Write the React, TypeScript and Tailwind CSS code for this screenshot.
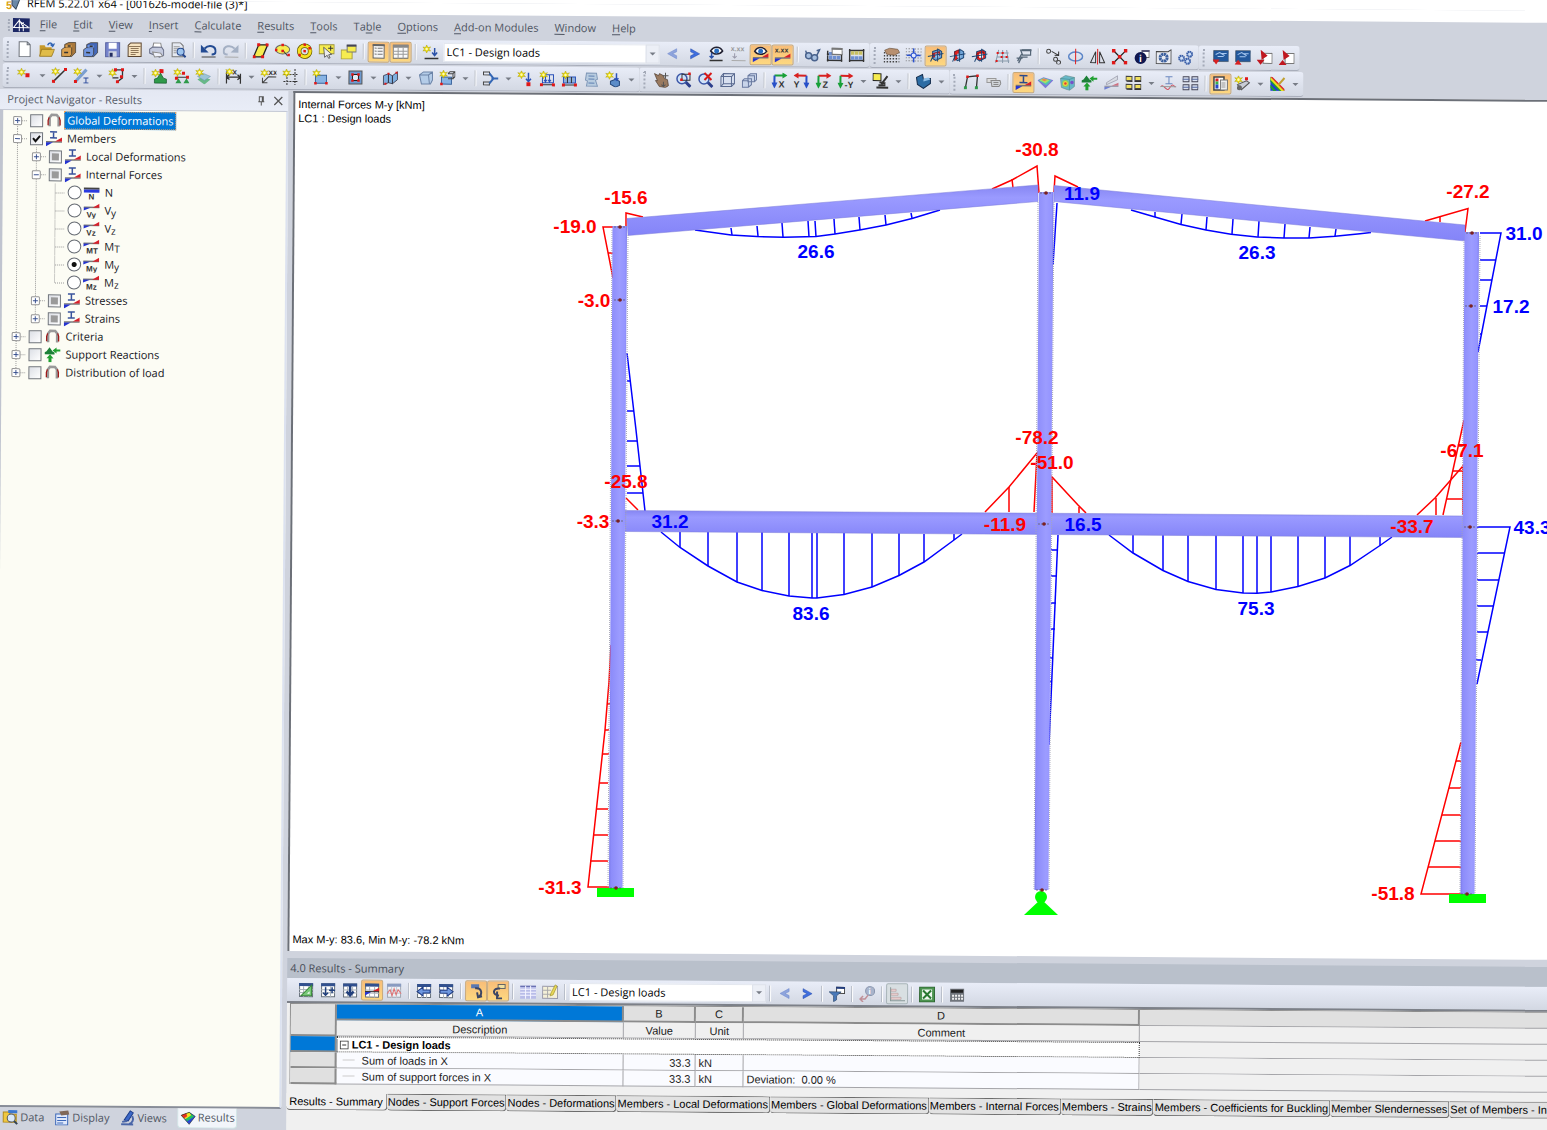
import type { ReactNode } from "react"
import clsx from "clsx"

// ---------- small drawing helpers for the 16x16 icons ----------

const Spark = ({ x = 4, y = 4 }: { x?: number; y?: number }) => (
  <g transform={`translate(${x} ${y})`}>
    <path d="M0-4 1.2-1.4 4-2 2 0 4 2 1.2 1.6 0 4-1.2 1.6-4 2-2 0-4-2-1.2-1.4Z" fill="#f0e000" stroke="#a89a10" strokeWidth=".5" />
    <circle r="1.3" fill="#fffbb0" />
  </g>
)

const Dots = ({ at, c = "#e01818", s = 3 }: { at: number[][]; c?: string; s?: number }) => (
  <>
    {at.map(([x, y]) => (
      <rect key={`${x}-${y}`} x={x - s / 2} y={y - s / 2} width={s} height={s} fill={c} />
    ))}
  </>
)

const L = ({ d, c = "#333", w = 1, f = "none" }: { d: string; c?: string; w?: number; f?: string }) => (
  <path d={d} stroke={c} strokeWidth={w} fill={f} />
)

const T = ({ x, y, s = 8, c = "#333", children }: { x: number; y: number; s?: number; c?: string; children: string }) => (
  <text x={x} y={y} fontSize={s} fontWeight="bold" fill={c} fontFamily="Liberation Sans, sans-serif">
    {children}
  </text>
)

const Diagram = () => (
  <>
    <L d="M0 11.500H16" c="#777" w={1.5} />
    <path d="M0 12h7l-7 4Z" fill="#2433d0" />
    <path d="M16 11H9l7-4Z" fill="#d8202a" />
  </>
)

const Sheet = ({ c = "#fff" }: { c?: string }) => (
  <>
    <path d="M1.500 1.500h13v13h-13Z" fill={c} stroke="#66707a" />
    <path d="M1 1h14v3H1Z" fill="#31508f" />
    <L d="M1 7.500H15M1 10.500H15M5.500 4V15M10.500 4V15" c="#a8b0b8" />
  </>
)

const Frame3d = ({ hot }: { hot: number }) => (
  <>
    <path d="M5 4 11 2l3 2v6l-6 3-3-2Z" fill={hot === 2 ? "#e02020" : "#6fa4d8"} stroke="#1d4674" />
    <path d={hot === 1 ? "M5 4l4-2v8l-4 3Z" : "M5 6l7-2v4L5 10Z"} fill="#e02020" stroke="#701010" strokeWidth=".6" />
    <path d="M7.500 6h4v4h-4Z" fill={hot === 2 ? "#fff" : "#9cc7ee"} />
    <L d="M0 9 16 6M3 14 6 7M10 14V1" c="#1d4674" />
  </>
)

const Cabinet = ({ a, b }: { a: string; b: string }) => (
  <>
    <path d="M4 3 8 1h7v10l-4 4H4Z" fill={b} stroke="#39332a" strokeWidth=".7" />
    <path d="M1 8l3-2h7v7l-2 2H1Z" fill={a} stroke="#39332a" strokeWidth=".7" />
    <path d="M5 3.500h6V6H5Z" fill={a} />
    <L d="M3.500 11h4M7 4.500h3" w={1.5} />
  </>
)

const Axis = ({ a, b, t, m }: { a: string; b: string; t: string; m?: boolean }) => (
  <g>
    <g transform={m ? "matrix(-1 0 0 1 16 0)" : undefined}>
      <L d="M3 3h9" c={a} w={2} />
      <path d="M11 0l5 3-5 3Z" fill={a} />
      <L d="M3 3v9" c={b} w={2} />
      <path d="M0 10l3 6 3-6Z" fill={b} />
    </g>
    <T x={m ? 0 : 7} y={15} s={9}>{t}</T>
  </g>
)

const Magnifier = () => (
  <>
    <L d="M10 10l5 5" c="#2d3f8c" w={3} />
    <circle cx="6.500" cy="7" r="5" fill="#cfe2f8" stroke="#3c57a8" strokeWidth="1.500" />
  </>
)

const icons: Record<string, ReactNode> = {
  new: <path d="M2.500.5h8l3 3v12h-11ZM10.500.5v3h3" fill="#fff" stroke="#6b7078" />,
  open: (
    <>
      <path d="M1 4h5l1 2h6v9H1Z" fill="#c79a2b" />
      <path d="M3 8h13l-3 7H1Z" fill="#e0bc48" stroke="#8a6a14" strokeWidth=".7" />
      <L d="M9 4c1-3 4-3 5 0M12 3l2 2 2-3" c="#3567b5" w={1.5} />
    </>
  ),
  "model-archive": <Cabinet a="#d9a050" b="#a8783c" />,
  "block-archive": <Cabinet a="#6f95e0" b="#4468b8" />,
  save: (
    <>
      <path d="M1 1h14v14H1Z" fill="#7684cc" stroke="#5560a0" />
      <path d="M4 1h8v6H4Z" fill="#fff" />
      <path d="M4 9.500h8V15H4Z" fill="#d4d8e4" />
      <path d="M5 11h3v4H5Z" fill="#222c60" />
    </>
  ),
  report: (
    <>
      <path d="M1.500 3.500 4 1h10.500v13.500h-13Z" fill="#f6e3c0" stroke="#5c4630" />
      <L d="M4 6.500h8M4 8.500h8M4 10.500h8M4 12.500h5M2 4.500h12" c="#8e7658" />
    </>
  ),
  print: (
    <>
      <path d="M4 6 5 1h7l1 5Z" fill="#fff" stroke="#888" />
      <path d="M1 7l3-2h9l2 3v5l-4 2-10-4Z" fill="#c4cade" stroke="#6a7088" />
      <path d="M4 10l8 1 2 3-8 1Z" fill="#eef1fa" stroke="#888" />
    </>
  ),
  preview: (
    <>
      <path d="M1.500.5h8l3 3v11h-11Z" fill="#e6eaf2" stroke="#777" />
      <L d="M3 4.500h6M3 6.500h6M3 8.500h3M3 10.500h3" c="#999" />
      <L d="M12 12l3 3" c="#26478c" w={2} />
      <circle cx="10" cy="9.500" r="3.500" fill="#9cc4ee" stroke="#26478c" />
    </>
  ),
  undo: (
    <>
      <L d="M4 6c4-4 11-3 11 3 0 2-2 3-4 3" c="#234b93" w={2} />
      <path d="M0 2v8h8Z" fill="#234b93" />
      <L d="M1 14.500h14" w={1} c="#444" />
    </>
  ),
  redo: (
    <>
      <L d="M12 6C8 2 1 3 1 9c0 2 2 3 4 3" c="#a4b0c4" w={2} />
      <path d="M16 2v8H8Z" fill="#a4b0c4" />
      <L d="M2 14.500h14" w={1} c="#aaa" />
    </>
  ),
  "select-rhomboid": (
    <>
      <path d="M6 2h9l-5 12H1Z" fill="#f6ec50" stroke="#222" strokeWidth="1.300" />
      <Dots at={[[6, 2], [14.5, 2], [1.5, 14], [10, 14]]} />
    </>
  ),
  "select-ellipse": (
    <>
      <ellipse cx="8" cy="6.500" rx="7" ry="4.500" fill="#f6ec50" stroke="#666" />
      <L d="M8 7l5 6" />
      <Dots at={[[8, 2], [1.5, 7], [14, 12], [8, 8]]} s={2.5} />
    </>
  ),
  "select-ring": (
    <>
      <circle cx="8" cy="8" r="5.500" fill="none" stroke="#665c00" strokeWidth="4.500" />
      <circle cx="8" cy="8" r="5.500" fill="none" stroke="#f6e020" strokeWidth="3" />
      <Dots at={[[8, 1.5], [8, 8], [3, 12], [13, 5]]} s={2.5} />
    </>
  ),
  "select-window": (
    <>
      <path d="M.5 1.500h15v9H.5Z" fill="#f6ec50" stroke="#999040" />
      <path d="M5 4l8 7-3 .5 1.500 3-1.500.5L8.500 12 6 14Z" fill="#eee" stroke="#333" strokeWidth=".7" />
      <L d="M12 2.500v5M9.500 5h5" />
    </>
  ),
  "select-group": (
    <>
      <path d="M.5 6.500h11v9H.5Z" fill="#f6ec50" stroke="#aaa040" />
      <path d="M6.500 2.500h9v6h-9Z" fill="#f6ec50" stroke="#777" />
      <path d="M6 1h10v2H6Z" fill="#445" />
    </>
  ),
  navigator: (
    <>
      <path d="M2.500 1.500h11v13h-11Z" fill="#f5f5f5" stroke="#666" />
      <L d="M4 4.500h2M7 4.500h5M4 7.500h2M7 7.500h5M4 10.500h2M7 10.500h5" c="#777" />
      <L d="M2 1.500h12" w={2} c="#666" />
    </>
  ),
  tables: (
    <>
      <path d="M.5 1.500h15v13H.5Z" fill="#fafafa" stroke="#666" />
      <path d="M0 1h16v3H0Z" fill="#888" />
      <L d="M1 7.500h14M1 10.500h14M5.500 4v11M10.500 4v11" c="#999" />
    </>
  ),
  "load-case": (
    <>
      <Spark x={4} y={5} />
      <L d="M12 4v7M9.500 8.500l2.500 3 2.500-3" c="#2b52a8" w={1.5} />
      <L d="M2 14.500h14" w={1.5} />
    </>
  ),
  prev: <path d="M12 3 3 8l9 5V10L8 8l4-2Z" fill="#8ea4dc" stroke="#6a84cc" strokeWidth=".5" />,
  next: <path d="M4 3l9 5-9 5V10L8 8 4 6Z" fill="#3f6fe0" stroke="#2448a8" strokeWidth=".5" />,
  "show-loads": (
    <>
      <path d="M2 5c3-5 9-5 12 0-3 4-9 4-12 0Z" fill="#fff" stroke="#223" strokeWidth="1.500" />
      <circle cx="8" cy="5" r="2.500" fill="#2b6fc0" />
      <L d="M3 7v5M1 10l2 2 2-2" c="#2b52a8" w={1.5} />
      <L d="M1 14.500h13" w={1.5} />
    </>
  ),
  "load-values": (
    <>
      <T x={0} y={5} s={7} c="#999">x.xx</T>
      <L d="M4 7v5M2 10l2 2 2-2" c="#99a" />
      <L d="M1 14.500h14" c="#aaa" />
    </>
  ),
  "show-results": (
    <>
      <path d="M2 5c3-5 9-5 12 0-3 4-9 4-12 0Z" fill="#fff" stroke="#223" strokeWidth="1.500" />
      <circle cx="8" cy="5" r="2.500" fill="#2b6fc0" />
      <Diagram />
    </>
  ),
  "result-values": (
    <>
      <T x={0} y={6} s={7}>x.xx</T>
      <Diagram />
    </>
  ),
  glasses: (
    <>
      <circle cx="4" cy="9" r="3" fill="#a8c0e0" stroke="#49628c" strokeWidth="1.500" />
      <circle cx="10" cy="11" r="3" fill="#a8c0e0" stroke="#49628c" strokeWidth="1.500" />
      <L d="M2 7 1 4M12 9l3-6-3 1" c="#49628c" w={1.5} />
    </>
  ),
  "calc-window": (
    <>
      <L d="M1 4v11M15 4v11M0 7.500h16M0 13.500h16" c="#333" w={1.5} />
      <Dots at={[[4, 11], [8, 11], [12, 11], [4, 7]]} c="#6f90d0" s={3.5} />
      <path d="M5.500 1.500h10v6h-10Z" fill="#fff" stroke="#777" />
      <path d="M5 1h11v2H5Z" fill="#777" />
    </>
  ),
  calculate: (
    <>
      <L d="M1 2v13M15 2v13M0 3.500h16M0 13.500h16" c="#333" w={1.5} />
      <Dots at={[[4, 6], [8, 6], [12, 6]]} c="#c8c060" s={3.5} />
      <Dots at={[[4, 11], [8, 11], [12, 11]]} c="#6f90d0" s={3.5} />
    </>
  ),
  "hand-grid": (
    <>
      <path d="M0 5.500h16M0 8.500h16M0 11.500h16M0 14.500h16" stroke="#444" strokeWidth="1.500" strokeDasharray="1.500 1.500" />
      <path d="M1 3l5-2 8 1 2 3-5 3-8-1Z" fill="#b89070" stroke="#604830" strokeWidth=".6" />
    </>
  ),
  snap: (
    <>
      <path d="M0 1.500h16M0 4.500h16M0 7.500h16M0 10.500h16M0 13.500h16" stroke="#666" strokeDasharray="1 2" />
      <L d="M8 1v14M1 8h14" c="#2b52d0" w={1.5} />
      <circle cx="8" cy="8" r="2.500" fill="#dfe8ff" stroke="#2b52d0" />
    </>
  ),
  "plane-xy": <Frame3d hot={0} />,
  "plane-yz": <Frame3d hot={1} />,
  "plane-xz": <Frame3d hot={2} />,
  "guide-grid": (
    <>
      <L d="M5 2 2 15M9 2v13M13 2l2 13M4 5h11M3 9h12M2 13h14" c="#89a" />
      <Dots at={[[4, 5], [9, 5], [13, 9], [8, 9], [3, 13]]} s={2} />
    </>
  ),
  "guide-lines": (
    <>
      <L d="M5 2h10v5H7ZM3 15 6 9h6M1 10h6M2 13l4-7" c="#567" w={1.3} />
      <path d="M6 1h10v2H6Z" fill="#567" />
    </>
  ),
  move: (
    <>
      <circle cx="3" cy="3" r="2" fill="none" stroke="#444" />
      <circle cx="10" cy="11" r="2" fill="none" stroke="#444" />
      <circle cx="13" cy="14" r="2" fill="none" stroke="#444" />
      <L d="M6 3l7 4M13 3v4H9" />
    </>
  ),
  rotate: (
    <>
      <ellipse cx="8" cy="8" rx="7" ry="4.500" fill="none" stroke="#5b85c8" strokeWidth="1.500" />
      <L d="M8 0v16" c="#e02020" />
    </>
  ),
  mirror: (
    <>
      <L d="M6 3v11H1ZM10 3v11H15Z" />
      <L d="M8 0v16" c="#e02020" />
    </>
  ),
  "zoom-extents": (
    <>
      <L d="M2 2l12 12M14 2 2 14" c="#222" w={1.3} />
      <Dots at={[[2, 2], [14, 2], [2, 14], [14, 14], [8, 8]]} s={3.5} />
    </>
  ),
  info: (
    <>
      <path d="M8.500 1.500h7v7h-7Z" fill="#fff" stroke="#666" />
      <path d="M8 1h8v2H8Z" fill="#557" />
      <circle cx="7" cy="9" r="6" fill="#101850" />
      <T x={5.5} y={13} s={10} c="#fff">i</T>
    </>
  ),
  settings: (
    <>
      <path d="M.5 2.500h12l3-2v14H.5Z" fill="#e8eaf0" stroke="#444" />
      <circle cx="8" cy="8.500" r="3.500" fill="none" stroke="#3b5f9e" strokeWidth="3" strokeDasharray="2.200 .5" />
    </>
  ),
  gears: (
    <>
      <circle cx="4" cy="9" r="2.500" fill="#cfe0f8" stroke="#3b5fa8" strokeWidth="2" strokeDasharray="1.500 .4" />
      <circle cx="12" cy="5" r="2.500" fill="#cfe0f8" stroke="#3b5fa8" strokeWidth="2" strokeDasharray="1.500 .4" />
      <circle cx="10" cy="12" r="2.500" fill="#cfe0f8" stroke="#3b5fa8" strokeWidth="2" strokeDasharray="1.500 .4" />
    </>
  ),
  "export-down": (
    <>
      <path d="M1 1h15v11H1Z" fill="#22589c" stroke="#345" strokeWidth=".6" />
      <L d="M3 5l4-2 5 3M8 4h6M5 7h6" c="#a8c8f0" />
      <path d="M0 10h7l-3.500 5Z" fill="#d82020" />
    </>
  ),
  "export-up": (
    <>
      <path d="M1 1h15v11H1Z" fill="#22589c" stroke="#345" strokeWidth=".6" />
      <L d="M3 5l4-2 5 3M8 4h6M5 7h6" c="#a8c8f0" />
      <path d="M0 15h7l-3.500-5Z" fill="#d82020" />
    </>
  ),
  "pdf-down": (
    <>
      <path d="M6.500 3.500h9v10h-9Z" fill="#fff" stroke="#777" />
      <path d="M4 0l7 6-6 4ZM0 10h8l-4 5Z" fill="#c01820" />
    </>
  ),
  "pdf-up": (
    <>
      <path d="M6.500 3.500h9v10h-9Z" fill="#fff" stroke="#777" />
      <path d="M4 0l7 6-6 4ZM0 15h8l-4-5Z" fill="#c01820" />
    </>
  ),

  // modelling toolbar
  node: (
    <>
      <Spark x={5} y={5} />
      <Dots at={[[11, 8]]} s={4} />
    </>
  ),
  line: (
    <>
      <L d="M2 14 13 3" w={1.5} />
      <Spark x={4} y={4} />
      <Dots at={[[2, 14], [14, 2]]} />
    </>
  ),
  member: (
    <>
      <L d="M2 14 13 2" c="#7b9fd0" w={3} />
      <Spark x={4} y={4} />
      <Dots at={[[2, 14]]} />
      <L d="M10 10.500h5M12.500 11v4M10 15.500h5" c="#2b4a9c" />
    </>
  ),
  polyline: (
    <>
      <L d="M6 2h8v8l-5 4M4 10h6" w={1.3} />
      <Spark x={4} y={5} />
      <Dots at={[[7, 2], [14, 2], [13, 9], [9, 14]]} />
    </>
  ),
  support: (
    <>
      <path d="M9 5l3 5 3 1v4H3v-4l3-1Z" fill="#2f9a4a" stroke="#14582a" strokeWidth=".7" />
      <Spark x={4} y={5} />
      <Dots at={[[10, 3]]} s={4} />
    </>
  ),
  "line-support": (
    <>
      <L d="M3 9h11" />
      <path d="M5 10l3 5H2ZM13 10l3 5h-6Z" fill="#2f9a4a" />
      <Spark x={4} y={4} />
      <Dots at={[[10, 5], [3, 10], [14, 9]]} />
    </>
  ),
  "surface-support": (
    <>
      <path d="M2 11l5-3 8 3-6 5Z" fill="#68b888" />
      <path d="M2 8l6-3 7 3-6 4Z" fill="#9cc4d8" stroke="#6890a8" strokeWidth=".5" />
      <Spark x={4} y={4} />
    </>
  ),
  dimension: (
    <>
      <L d="M1 3v12M15 5v10M1 8.500h14M4 6 1 8.500 4 11M12 6l3 2.500L12 11" w={1.3} />
      <Spark x={4} y={3} />
      <T x={7} y={6} s={8}>x</T>
    </>
  ),
  comment: (
    <>
      <L d="M2 14 8 8h8M2 9v5h5" c="#444" />
      <Spark x={4} y={4} />
      <T x={8} y={6} s={8}>xx</T>
    </>
  ),
  guide: (
    <>
      <path d="M1 5.500h15M1 12.500h15M4.500 2v14M12.500 0v16" stroke="#333" strokeDasharray="2 1" />
      <Spark x={4} y={4} />
    </>
  ),
  surface: (
    <>
      <path d="M3 6h11v8H3Z" fill="#88b4e4" stroke="#39639c" />
      <Spark x={4} y={4} />
      <Dots at={[[3, 14], [14, 14]]} s={2.5} />
    </>
  ),
  opening: (
    <>
      <path d="M1.500 1.500h13v13h-13Z" fill="#6d9ad0" stroke="#555" />
      <path d="M5 5h6v6H5Z" fill="#e4ecf8" stroke="#222" />
      <Dots at={[[5, 5], [11, 5], [5, 11], [11, 11]]} s={2.5} />
    </>
  ),
  "surface-mesh": (
    <>
      <path d="M1 6l5-2v9l-5 2ZM6 4l4 2v8l-4-1ZM10 6l5-4v8l-5 4Z" fill="#7fb0e0" stroke="#334" strokeWidth=".8" />
      <Dots at={[[6, 4], [14, 3], [3, 14]]} s={2} />
    </>
  ),
  solid: <path d="M2 5l4-3h9v8l-2 4H4ZM2 5h9l1 9M11 5l4-3" fill="#b4cce8" stroke="#6c84a8" />,
  "solid-new": (
    <>
      <path d="M2 7h10v7H2Z" fill="#88b4e4" stroke="#39639c" />
      <path d="M8.500 3.500h5v5h-5M8.500 3.500l2-2h5v5l-2 2M13.500 3.500l2-2" fill="none" stroke="#444" />
      <Spark x={4} y={4} />
      <Dots at={[[2, 14]]} s={2.5} />
    </>
  ),
  connect: (
    <>
      <L d="M1 1.500h6v3H1ZM1 11.500h6v3H1Z" c="#444" />
      <L d="M7 3l4 5-4 5M9 8h7" c="#3567b5" w={2} />
    </>
  ),
  "node-load": (
    <>
      <Spark x={4} y={4} />
      <L d="M11 2v8M8.500 8l2.500 3 2.500-3" c="#2b52b8" w={1.5} />
      <Dots at={[[11, 13.5]]} s={4} />
    </>
  ),
  "line-load": (
    <>
      <L d="M3 4h11v8H3ZM6 4v7M10 4v7M4.500 9 6 11l1.500-2M8.500 9l1.500 2 1.500-2" c="#2b52b8" />
      <L d="M2 14h12" />
      <Spark x={4} y={4} />
      <Dots at={[[2, 14], [14, 14]]} />
    </>
  ),
  "member-load": (
    <>
      <path d="M2 6h12v6H2Z" fill="#8fb0dc" stroke="#2b52b8" />
      <L d="M2 14h12M6 6v6M10 6v6" />
      <Spark x={4} y={4} />
      <Dots at={[[2, 14], [14, 14]]} />
    </>
  ),
  "surface-load": (
    <>
      <path d="M3 2h10l1 6-2 1 2 6H3l1-5-2-1Z" fill="#b8cce0" stroke="#8098b8" />
      <L d="M5 5h6M5 8h6M5 12h6" c="#7b98c0" w={1.5} />
    </>
  ),
  "free-load": (
    <>
      <path d="M5 10l5-2 4 2v4l-4 2-5-3Z" fill="#5b8cc8" stroke="#26487c" />
      <L d="M11 2v7M9 7l2 2 2-2" c="#2b52b8" w={1.5} />
      <Spark x={4} y={4} />
    </>
  ),
  pan: (
    <>
      <path d="M1 2l4 2 1-2 4 2 1 3 3 1 1 6-3 2-6-1-4-6h2Z" fill="#9a7a60" stroke="#4c3a2c" strokeWidth=".7" />
      <L d="M12 1v6M9 4h6M10 10v5M8 13l2 2 2-2" c="#555" />
    </>
  ),
  "zoom-window": (
    <>
      <Magnifier />
      <L d="M6.500 2.500h8v6h-8Z" />
      <Dots at={[[14, 2], [6, 8]]} s={2.5} />
    </>
  ),
  "zoom-reset": (
    <>
      <Magnifier />
      <L d="M7 1l7 7M14 1 7 8" c="#d81818" w={2} />
    </>
  ),
  "view-iso": (
    <>
      <path d="M1.500 4.500 4 1.500h11v10l-3 3H1.500Z" fill="#d8e0f0" stroke="#5a6a90" />
      <L d="M1.500 4.500H12v10M12 4.500l3-3M4 1.500v10h11M4 11.500l-2.500 3" c="#5a6a90" />
    </>
  ),
  "view-prev": (
    <path d="M6.500 3.500 9 1.500h6v6l-2 2H6.500ZM6.500 3.500H13v6M1 8.500 3 6.500h7v6l-3 2.500H1ZM1 8.500h6V15" fill="#c8d4ea" stroke="#6a7aa0" />
  ),
  "view-x": <Axis a="#18a038" b="#2850c8" t="X" />,
  "view-y": <Axis a="#d82020" b="#2850c8" t="Y" m />,
  "view-z": <Axis a="#d82020" b="#18a038" t="Z" />,
  "view-minus-y": <Axis a="#d82020" b="#18a038" t="-Y" />,
  visibility: (
    <>
      <L d="M7 9l6 1M15 3 9 11M4 14.500h12M6 12h7" w={2} />
      <path d="M.5.5h8v7h-8Z" fill="#f6ec50" stroke="#222" />
    </>
  ),
  render: (
    <>
      <path d="M1 4l6-3 1 5 7-1v5l-7 5-6-4Z" fill="#2c6ca4" stroke="#142c4c" />
      <path d="M8 8l7-2-2-2-5 1Z" fill="#8fc0e8" />
    </>
  ),
  "frame-results": (
    <>
      <L d="M2 14 4 3l10-1-1 12" c="#333" w={1.3} />
      <Dots at={[[4, 3], [14, 2]]} s={2.5} />
      <Dots at={[[2, 14], [13, 14]]} c="#2f9a4a" />
    </>
  ),
  pipe: (
    <>
      <path d="M1.500 4.500h9v4h-9Z" fill="#ddd" stroke="#999" />
      <path d="M5.500 6.500h9l1 3-2 3h-7Z" fill="#d0d4d8" stroke="#888" />
      <L d="M8 8.500h5M8 10.500h5" c="#888" />
    </>
  ),
  "member-results": (
    <>
      <Diagram />
      <L d="M4 1.500h8M8 1v7M4 8.500h8" c="#2b4a8c" w={1.5} />
    </>
  ),
  "surface-results": (
    <>
      <path d="M0 6l6-3 10 3-8 8Z" fill="#7c7ad8" />
      <path d="M1 6l5-2 8 2-5 5Z" fill="#50c8b0" />
      <path d="M2 6l4-2 6 2-4 3Z" fill="#b0e060" />
      <path d="M4 5.500l2-1 4 1-3 1.500Z" fill="#f08050" />
    </>
  ),
  "solid-results": (
    <>
      <path d="M1 4l5-3 9 2v9l-5 4-8-3Z" fill="#68b8c8" stroke="#688" strokeWidth=".6" />
      <path d="M10 5v11M1 4l9 1 5-2" stroke="#488" strokeWidth=".6" fill="none" />
      <circle cx="6" cy="9" r="3.500" fill="#80d060" />
      <circle cx="6" cy="9" r="2.500" fill="#f0d040" />
      <circle cx="6" cy="9" r="1.200" fill="#e04030" />
      <circle cx="12.500" cy="8" r="1.800" fill="#7850c8" />
    </>
  ),
  "support-results": (
    <>
      <path d="M5 1l3 4 2 1v2H0V6l2-1Z" fill="#1d8038" />
      <path d="M16 3h-4V1L8 4l4 3V5h4ZM4 16v-4H2l3.500-4L9 12H7v4Z" fill="#20a030" />
    </>
  ),
  sections: (
    <>
      <path d="M3 8 14 1v4L3 10Z" fill="#d8dce4" stroke="#889" strokeWidth=".6" />
      <path d="M1 12h7l-7 3Z" fill="#7080d0" />
      <path d="M15 11H8l7-3Z" fill="#d07080" />
      <L d="M1 11.500h14" c="#889" />
    </>
  ),
  "result-windows": (
    <>
      <path d="M.5 1.500h6v4h-6ZM9.500 1.500h6v4h-6ZM.5 9.500h6v4h-6ZM9.500 9.500h6v4h-6Z" fill="#f0e060" stroke="#444" />
      <L d="M1 6.500h6M9 6.500h7M1 14.500h6M9 14.500h7" />
    </>
  ),
  "result-beam": (
    <>
      <L d="M5 1.500h7M8.500 1v7M5 8.500h7" c="#6b88c0" />
      <L d="M0 12c3-5 6 6 9 1s4-3 6-1" c="#d05060" />
      <L d="M0 11.500h16" c="#999" />
    </>
  ),
  "result-table": (
    <>
      <path d="M.5 1.500h6v5h-6ZM9.500 1.500h6v5h-6ZM.5 9.500h6v5h-6ZM9.500 9.500h6v5h-6Z" fill="#d8e0f0" stroke="#445" />
      <L d="M0 4h7M9 4h7M0 12h7M9 12h7" c="#5468a0" />
    </>
  ),
  "colour-panel": (
    <>
      <path d="M1.500 1.500h10v13h-10Z" fill="#fff" stroke="#444" strokeWidth="1.500" />
      <path d="M3 3h3v3H3Z" fill="#d82020" />
      <path d="M3 6h3v3H3Z" fill="#38b048" />
      <path d="M3 9h3v4H3Z" fill="#2848c8" />
      <path d="M8 4.500h7v10H8Z" fill="#eee" stroke="#777" />
      <L d="M9 7.500h4M9 9.500h4M9 11.500h4" c="#999" />
    </>
  ),
  "new-result": (
    <>
      <path d="M3 9l9-4 3 2-8 7Z" fill="#c8ccd4" stroke="#555" />
      <circle cx="5" cy="12" r="2.500" fill="#666" />
      <Spark x={4} y={4} />
      <Dots at={[[12, 3]]} />
    </>
  ),
  isobands: (
    <>
      <path d="M1 1v14h14Z" fill="#2040d0" />
      <path d="M1 1v5l9 9h5Z" fill="#20a030" />
      <path d="M1 1v3l11 11h3Z" fill="#f0e020" />
      <path d="M1 1l14 14V13L3 1Z" fill="#e02020" />
      <path d="M1 9l6 6H4l-3-3Z" fill="#20a030" />
      <L d="M9 9l6-7" w={2} c="#c0a030" />
    </>
  ),

  // results table toolbar
  "t-edit": (
    <>
      <Sheet />
      <path d="M3 13.500 13.500 3v10.500Z" fill="#78c878" stroke="#388838" />
      <path d="M9 11.500h2.500V9Z" fill="#fff" />
    </>
  ),
  "t-insert": (
    <>
      <Sheet />
      <L d="M5.500 5v8M3 10.500 5.500 13 8 10.500M12 5v6M9 8h6" c="#22407c" w={1.5} />
    </>
  ),
  "t-down": (
    <>
      <Sheet />
      <L d="M8 3v9M4.500 9 8 13l3.500-4" c="#22407c" w={2.5} />
    </>
  ),
  "t-diagram": (
    <>
      <Sheet />
      <path d="M15 5v4H8Z" fill="#d82028" />
      <path d="M1 13V9h7Z" fill="#2433d0" />
      <L d="M1 9h14" />
    </>
  ),
  "t-wave": (
    <>
      <g opacity=".5"><Sheet /></g>
      <L d="M1 11l3-4 2 6 2-7 2 6 2-5 3 4" c="#e07070" />
    </>
  ),
  "t-left": (
    <>
      <Sheet />
      <path d="M1 8.500 7 4v3h7v3H7v3Z" fill="#6f98e0" stroke="#203c84" />
    </>
  ),
  "t-right": (
    <>
      <Sheet />
      <path d="M15 8.500 9 4v3H2v3h7v3Z" fill="#6f98e0" stroke="#203c84" />
    </>
  ),
  "t-sync": (
    <>
      <path d="M3 1h8v4H3Z" fill="#5b78b0" />
      <L d="M7 5c7-1 8 6 3 9M9 9l1 5 4-1" c="#3c4664" w={2} />
    </>
  ),
  "t-follow": (
    <>
      <path d="M8 1h7v4H8Z" fill="#f0e0a0" stroke="#666" />
      <L d="M10 5C2 4 2 12 9 12M7 8v7h5" c="#3c4664" w={2} />
    </>
  ),
  "t-cells": (
    <>
      <path d="M0 2h16v13H0Z" fill="#b8bce8" />
      <L d="M0 2.500h16" c="#5058a0" />
      <L d="M0 5.500h16M0 8.500h16M0 11.500h16M5.500 2v13M10.500 2v13" c="#f4f4ff" />
    </>
  ),
  "t-note": (
    <>
      <path d="M.5 2.500h15v12H.5Z" fill="#f4f0d8" stroke="#99a" />
      <L d="M1 6.500h8M1 10.500h8M5.500 3v11" c="#aaa" />
      <path d="M13 1l2 1-4 9-3 1 1-3Z" fill="#e8d858" stroke="#988820" strokeWidth=".6" />
    </>
  ),
  filter: (
    <>
      <path d="M7.500 1.500h8v6h-8Z" fill="#fff" stroke="#444" />
      <path d="M7 1h9v2H7Z" fill="#223c7c" />
      <path d="M0 6h12L7.500 10v4l-3 2v-6Z" fill="#4878b8" stroke="#203c60" strokeWidth=".6" />
    </>
  ),
  "t-info": (
    <>
      <circle cx="11" cy="5" r="4.500" fill="#a8b4cc" stroke="#8894ac" />
      <T x={9.5} y={8} c="#fff">i</T>
      <L d="M1 13h5l3-4M4 10l-3 3 3 3" c="#c09098" w={1.5} />
    </>
  ),
  "t-bars": (
    <>
      <L d="M1.500 1v13.500H16" c="#899" />
      <path d="M2 3h5v2H2ZM2 7h7v2H2ZM2 11h10v2H2Z" fill="#f0d4d4" stroke="#b09898" strokeWidth=".6" />
    </>
  ),
  excel: (
    <>
      <path d="M.5.5h15v15H.5Z" fill="#4c9450" stroke="#2c6430" />
      <path d="M3 3h10v10H3Z" fill="#f0f8f0" />
      <L d="M4 4l8 8M12 4 4 12" c="#287830" w={2} />
    </>
  ),
  calculator: (
    <>
      <path d="M1 2h14v13H1Z" fill="#70757c" />
      <path d="M2 3h12v3H2Z" fill="#222" />
      <path d="M3 9h11M3 12h11" stroke="#f0f0f0" strokeWidth="2" strokeDasharray="2 1" />
    </>
  ),

  // navigator
  frame: (
    <>
      <L d="M3.500 14V5l2-2.500h5l2 2.500v9" c="#999" w={2.5} />
      <L d="M2 13V8l1-3M14 13V8l-1-3" c="#a01818" w={1.3} />
    </>
  ),
  "i-beam": (
    <>
      <Diagram />
      <L d="M4 1.500h7M7.500 1v6M4 7.500h7" c="#39539c" w={1.5} />
    </>
  ),
  data: (
    <>
      <path d="M1 3h6l1 2h6v8H1Z" fill="#f0c840" stroke="#b08818" />
      <path d="M6 1h9v3H6Z" fill="#3c78d0" />
      <circle cx="9" cy="9" r="4" fill="#d8e8fa" stroke="#555" />
      <L d="M12 12l3 3" c="#345" w={2} />
    </>
  ),
  display: (
    <>
      <path d="M1.500 4.500h12v11h-12Z" fill="#dfe8fa" stroke="#3c68b8" />
      <path d="M5 2l9-1 1 4-8 1Z" fill="#806858" />
      <L d="M3 8h9M3 11h9M3 13.500h6" c="#3c68b8" />
    </>
  ),
  views: (
    <>
      <path d="M11 1l3 2-5 8-4-1Z" fill="#3c68c8" stroke="#1c3c88" />
      <L d="M2 14.500h12M3 12l5-1M13 6c2 4 0 7-3 8" c="#4a66a8" w={2} />
    </>
  ),
  results: (
    <>
      <path d="M1 5l8-3 6 4-6 8Z" fill="#2848d8" />
      <path d="M1 5l8-3 5 4-7 5Z" fill="#20c060" />
      <path d="M1 5l8-3 2 3-6 4Z" fill="#f0e020" />
      <path d="M1 5l5-2 1 3-3 2Z" fill="#e83020" />
      <path d="M1 5l8-3 6 4-6 8Z" fill="none" stroke="#222" strokeWidth=".6" />
    </>
  ),
}

function Icon({ name }: { name: string }) {
  return (
    <svg viewBox="0 0 16 16" className="size-4 shrink-0" aria-hidden="true">
      {icons[name]}
    </svg>
  )
}

// ---------- toolbars ----------

const CARET = "v"
const SEP = "|"

// "*" in front of a name marks a pressed button, "~" a greyed pressed one
const mainBar = [
  "new open model-archive block-archive save report print preview | undo redo | select-rhomboid select-ellipse select-ring select-window select-group | *navigator *tables | load-case SELECT prev next show-loads load-values *show-results *result-values | glasses calc-window calculate",
  "hand-grid snap *plane-xy plane-yz plane-xz guide-grid guide-lines | move rotate mirror zoom-extents info settings gears",
  "export-down export-up pdf-down pdf-up",
]

const modelBar = [
  "node v line member v polyline v | support line-support surface-support | dimension v comment guide | surface v opening v surface-mesh v solid solid-new v | connect v node-load line-load member-load surface-load free-load v",
  "pan zoom-window zoom-reset view-iso view-prev | view-x view-y view-z view-minus-y v visibility v | render v",
  "frame-results pipe | *member-results surface-results solid-results support-results sections result-windows v result-beam result-table | *colour-panel new-result v isobands v",
]

const resultsBar =
  "t-edit t-insert t-down *t-diagram t-wave | t-left t-right | *t-sync *t-follow | t-cells t-note | SELECT | prev next | filter | t-info | ~t-bars | excel | calculator"

const Caret = () => <span className="size-0 border-x-[3px] border-t-[3px] border-x-transparent border-t-[#777c86]" />

function LoadCaseSelect({ id, className }: { id: string; className: string }) {
  return (
    <span className={clsx("grid h-[18px] shrink-0 items-center bg-white", className)}>
      <select
        id={id}
        aria-label="Load case"
        className="[grid-area:1/1] h-full w-full appearance-none border border-[#e3e7ef] bg-white px-[2px] text-[11px] text-black outline-none"
      >
        <option>LC1 - Design loads</option>
      </select>
      <span className="pointer-events-none [grid-area:1/1] flex h-full w-[14px] items-center justify-center justify-self-end border border-[#dde1ea] bg-[#eceff6]">
        <Caret />
      </span>
    </span>
  )
}

function Tools({ items, id, selectClass }: { items: string; id: string; selectClass: string }) {
  return (
    <>
      {items.split(" ").map((item, i) => {
        if (item === SEP) return <span key={i} className="mx-[3px] h-4 w-[2px] shrink-0 border-l border-[#b4bac6] bg-white" />
        if (item === "SELECT") return <LoadCaseSelect key={i} id={id} className={selectClass} />
        if (item === CARET)
          return (
            <button key={i} type="button" aria-label="More" className="flex h-5 w-[13px] shrink-0 items-center justify-center">
              <Caret />
            </button>
          )
        const name = item.replace(/^[*~]/, "")
        return (
          <button
            key={i}
            type="button"
            aria-label={name}
            className={clsx(
              "flex h-[21px] w-[22px] shrink-0 items-center justify-center rounded-[2px] border",
              item[0] === "*" && "border-[#c8a878] bg-linear-to-b from-[#f8bd78] to-[#fdd880]",
              item[0] === "~" && "border-[#a8b4b8] bg-[#d8dfe2]",
              !/^[*~]/.test(item) && "border-transparent"
            )}
          >
            <Icon name={name} />
          </button>
        )
      })}
    </>
  )
}

function Bar({ groups, id }: { groups: string[]; id: string }) {
  return (
    <div role="toolbar" className="flex h-[26px] items-start pl-[3px]">
      {groups.map((group, i) => (
        <div
          key={i}
          className="flex h-[25px] shrink-0 items-center rounded-[3px] border-b border-[#a9aebb] bg-linear-to-b from-[#e9edf8] to-[#d3d8e3] pr-[2px]"
        >
          <span className="mr-[5px] ml-[4px] h-[17px] border-l-2 border-dotted border-[#a4aab8]" />
          <Tools items={group} id={id} selectClass="mx-[2px] w-[216px]" />
        </div>
      ))}
    </div>
  )
}

// ---------- project navigator ----------

type Row = {
  label: string
  sub?: string
  level: number
  icon?: string
  box?: "off" | "on" | "mixed"
  open?: boolean
  first?: boolean
  last?: boolean
  badge?: string
}

const tree: Row[] = [
  { label: "Global Deformations", level: 0, icon: "frame", box: "off", first: true },
  { label: "Members", level: 0, icon: "i-beam", box: "on", open: true },
  { label: "Local Deformations", level: 1, icon: "i-beam", box: "mixed" },
  { label: "Internal Forces", level: 1, icon: "i-beam", box: "mixed", open: true },
  { label: "N", level: 2, badge: "N" },
  { label: "V", sub: "y", level: 2, badge: "Vy" },
  { label: "V", sub: "z", level: 2, badge: "Vz" },
  { label: "M", sub: "T", level: 2, badge: "MT" },
  { label: "M", sub: "y", level: 2, badge: "My" },
  { label: "M", sub: "z", level: 2, badge: "Mz", last: true },
  { label: "Stresses", level: 1, icon: "i-beam", box: "mixed" },
  { label: "Strains", level: 1, icon: "i-beam", box: "mixed", last: true },
  { label: "Criteria", level: 0, icon: "frame", box: "off" },
  { label: "Support Reactions", level: 0, icon: "support-results", box: "off" },
  { label: "Distribution of load", level: 0, icon: "frame", box: "off", last: true },
]

const Guide = () => (
  <svg viewBox="0 0 19 18" className="h-[18px] w-[19px] shrink-0" aria-hidden="true">
    <path d="M9.500 0V18" stroke="#999" strokeDasharray="1 1" />
  </svg>
)

function Expander({ row }: { row: Row }) {
  return (
    <button type="button" aria-label={`Toggle ${row.label}`} aria-expanded={!!row.open} className="h-[18px] w-[19px] shrink-0">
      <svg viewBox="0 0 19 18" className="h-[18px] w-[19px]" aria-hidden="true">
        <path
          d={`M9.500 ${row.first ? 9 : 0}V${row.last ? 9 : 18}M14 9.500H19`}
          stroke="#999"
          strokeDasharray="1 1"
        />
        <rect x="5.500" y="5.500" width="8" height="8" rx="1" fill="#fff" stroke="#959595" />
        <path d={row.open ? "M7 9.500h5" : "M7 9.500h5M9.500 7v5"} stroke="#3a5290" />
      </svg>
    </button>
  )
}

function TreeBox({ id, state }: { id: string; state: "off" | "on" | "mixed" }) {
  return (
    <span className="grid size-[13px] shrink-0">
      <input
        id={id}
        type="checkbox"
        defaultChecked={state === "on"}
        className="[grid-area:1/1] size-[13px] appearance-none border border-[#6f747c] bg-linear-to-br from-[#dcdfe6] to-white"
      />
      {state === "mixed" && <span className="pointer-events-none [grid-area:1/1] m-[3px] bg-[#9a9a9a]" />}
      {state === "on" && (
        <svg viewBox="0 0 13 13" className="pointer-events-none [grid-area:1/1]" aria-hidden="true">
          <path d="M3 6l2.500 3L10 3.500" fill="none" stroke="#111" strokeWidth="2" />
        </svg>
      )}
    </span>
  )
}

function ForceIcon({ badge }: { badge: string }) {
  return (
    <svg viewBox="0 0 16 16" className="size-4 shrink-0" aria-hidden="true">
      {badge === "N" ? (
        <>
          <path d="M0 3h16v2H0Z" fill="#444" />
          <path d="M0 5h16v3H0Z" fill="#2a3be0" />
        </>
      ) : (
        <>
          <path d="M0 4h16v1.500H0Z" fill="#777" />
          <path d="M0 5h7l-7 3Z" fill="#2433d0" />
          <path d="M16 5H9l7-4Z" fill="#d8202a" />
        </>
      )}
      <T x={badge.length > 1 ? 3 : 5} y={15} s={8}>{badge}</T>
    </svg>
  )
}

function TreeRow({ row, selected }: { row: Row; selected: boolean }) {
  const id = `${row.label}${row.sub ?? ""}`.replace(/ /g, "-").toLowerCase()
  return (
    <li className="flex h-[18px] items-center">
      {row.level > 0 && <Guide />}
      {row.level > 1 && <Guide />}
      {row.box ? (
        <>
          <Expander row={row} />
          <span className="ml-[3px] flex items-center gap-[3px]">
            <TreeBox id={id} state={row.box} />
            <Icon name={row.icon!} />
          </span>
        </>
      ) : (
        <>
          <svg viewBox="0 0 19 18" className="h-[18px] w-[19px] shrink-0" aria-hidden="true">
            <path d={`M9.500 0V${row.last ? 9 : 18}M10 9.500H19`} stroke="#999" strokeDasharray="1 1" />
          </svg>
          <span className="ml-[3px] flex items-center gap-[2px]">
            <input
              id={id}
              type="radio"
              name="internal-force"
              defaultChecked={row.badge === "My"}
              className="size-[14px] shrink-0 appearance-none rounded-full border border-[#666b73] bg-white checked:bg-[radial-gradient(circle,#111_0_2px,#fff_3px)]"
            />
            <ForceIcon badge={row.badge!} />
          </span>
        </>
      )}
      <label
        htmlFor={id}
        className={clsx(
          "ml-[2px] border px-[2px] text-[11px] leading-[16px] whitespace-nowrap",
          selected ? "border-dotted border-[#e8a060] bg-[#0078d7] text-white" : "border-transparent text-[#16161c]"
        )}
      >
        {row.label}
        {row.sub && <span className="relative top-[2px] text-[10px]">{row.sub}</span>}
      </label>
    </li>
  )
}

function Navigator() {
  return (
    <aside className="flex w-[289px] shrink-0 flex-col bg-[#cfd3dd]">
      <header className="flex h-[20px] items-center gap-[7px] bg-linear-to-b from-[#e4e8f3] to-[#e9edf7] pr-[5px] pl-2 text-[#565d69]">
        <h2 className="flex-1 text-[11px] leading-[16px]">Project Navigator - Results</h2>
        <button type="button" aria-label="Pin">
          <svg viewBox="0 0 10 10" className="size-[10px]" aria-hidden="true">
            <path d="M2 6h6M3 6V1h4v5M6 1v5M5 6v4" fill="none" stroke="#555" />
          </svg>
        </button>
        <button type="button" aria-label="Close">
          <svg viewBox="0 0 10 10" className="size-[10px]" aria-hidden="true">
            <path d="M1 1l8 8M9 1 1 9" stroke="#555" strokeWidth="1.300" />
          </svg>
        </button>
      </header>
      <ul className="flex-1 border-t border-r-2 border-b-2 border-l-[4px] border-t-[#c3c8d4] border-r-[#dce2f0] border-b-[#888d98] border-l-[#c0c4cf] bg-[#fcfcf4] pt-[1px] pl-[5px]">
        {tree.map((row, i) => (
          <TreeRow key={i} row={row} selected={i === 0} />
        ))}
      </ul>
      <nav className="flex h-[23px] items-start gap-[10px] pl-[10px] text-[11px] text-[#4f5663]">
        {["Data", "Display", "Views", "Results"].map((tab) => (
          <a
            key={tab}
            href={`#${tab.toLowerCase()}`}
            className={clsx(
              "flex h-[20px] items-center gap-[2px]",
              tab === "Results" && "rounded-b-[4px] border border-t-0 border-[#cfe4e4] bg-[#f2f5fa] px-[2px]"
            )}
          >
            <Icon name={tab.toLowerCase()} />
            {tab}
          </a>
        ))}
      </nav>
    </aside>
  )
}

// ---------- model view ----------

const RED = "#ff0000"
const BLUE = "#0000ff"

type Pt = [number, number]

const moments: { c: string; pts: Pt[]; ticks?: [number, number, number, number][] }[] = [
  // left column, top and middle
  { c: RED, pts: [[613, 227], [603, 227], [613, 278]], ticks: [[608, 253, 613, 253]] },
  {
    c: BLUE,
    pts: [[627, 353], [636, 430], [645, 511]],
    ticks: [[627, 381, 630, 381], [627, 411, 634, 411], [627, 441, 637, 441], [627, 466, 640, 466], [627, 493, 643, 493]],
  },
  { c: RED, pts: [[626, 498], [638, 510]] },
  // left column, foot
  {
    c: RED,
    pts: [[611, 645], [609, 682], [605, 730], [588, 887], [612, 887]],
    ticks: [[590, 861, 608, 861], [594, 835, 608, 835], [597, 809, 608, 809], [600, 783, 608, 783], [602, 754, 609, 754], [605, 730, 609, 730], [607, 704, 610, 704]],
  },
  // left rafter
  { c: RED, pts: [[626, 226], [626, 213], [643, 217]] },
  {
    c: BLUE,
    pts: [[695, 230], [731, 235], [757, 236.5], [784, 237.3], [816, 236.5], [835, 234], [861, 229.7], [886, 225], [912, 218.5], [940, 210]],
    ticks: [[731, 228, 732, 235], [757, 226, 758, 236], [782, 223, 783, 237], [808, 221, 809, 237], [815, 221, 816, 237], [834, 219, 835, 234], [859, 217, 860, 230], [885, 215, 886, 225], [911, 213, 912, 218]],
  },
  { c: RED, pts: [[992, 189], [1012, 180], [1037, 166], [1039, 193]], ticks: [[1012, 179, 1013, 188]] },
  // right rafter
  { c: RED, pts: [[1054, 192], [1055, 176], [1078, 187]] },
  {
    c: BLUE,
    pts: [[1131, 210], [1155, 217], [1181, 224.5], [1206, 230], [1231, 234.3], [1257, 237], [1284, 238], [1309, 238], [1335, 236.3], [1360, 233.7], [1371, 232.5]],
    ticks: [[1155, 212, 1155, 217], [1182, 214, 1181, 224], [1207, 217, 1206, 230], [1233, 219, 1232, 234], [1259, 221, 1258, 237], [1285, 224, 1284, 238], [1310, 227, 1309, 238], [1336, 229, 1335, 236]],
  },
  { c: RED, pts: [[1425, 221], [1468, 208.5], [1465, 232]], ticks: [[1440, 217, 1440, 222]] },
  // centre column
  { c: BLUE, pts: [[1057, 203], [1053, 265]] },
  {
    c: BLUE,
    pts: [[1058, 535], [1049, 745]],
    ticks: [[1051, 550, 1058, 550], [1051, 576, 1057, 576], [1051, 603, 1056, 603], [1051, 629, 1055, 629], [1050, 658, 1053, 658], [1050, 682, 1052, 682]],
  },
  // right column
  {
    c: BLUE,
    pts: [[1480, 233], [1501, 233], [1478, 352]],
    ticks: [[1480, 260, 1496, 260], [1480, 280, 1492, 280], [1480, 306, 1487, 306], [1480, 334, 1482, 334]],
  },
  { c: RED, pts: [[1464, 420], [1443, 515]], ticks: [[1459, 446, 1463, 446], [1453, 471, 1463, 471], [1447, 499, 1463, 499]] },
  {
    c: BLUE,
    pts: [[1477, 527], [1510, 527], [1477, 684]],
    ticks: [[1477, 553, 1504, 553], [1477, 580, 1499, 580], [1477, 606, 1493, 606], [1477, 632, 1488, 632], [1476, 660, 1481, 660]],
  },
  {
    c: RED,
    pts: [[1461, 742], [1421, 894], [1463, 894]],
    ticks: [[1428, 867, 1461, 867], [1435, 841, 1461, 841], [1442, 815, 1461, 815], [1449, 788, 1461, 788], [1456, 761, 1461, 761]],
  },
  // left floor beam
  {
    c: BLUE,
    pts: [[661, 532], [680, 547.5], [708, 566], [737, 582], [762, 590.5], [789, 596], [812, 598], [817, 598], [844, 594.5], [872, 587], [899, 575.5], [924, 562], [954, 540], [962, 534]],
    ticks: [[680, 532, 680, 547], [708, 532, 708, 566], [737, 532, 737, 582], [762, 532, 762, 590], [789, 532, 789, 596], [812, 533, 812, 598], [817, 533, 817, 598], [844, 533, 844, 594], [872, 533, 872, 587], [899, 533, 899, 575], [924, 534, 924, 562], [954, 534, 954, 540]],
  },
  { c: RED, pts: [[985, 512], [1009, 487], [1037, 453], [1034, 512]], ticks: [[1009, 487, 1009, 512]] },
  // right floor beam
  { c: RED, pts: [[1052, 513], [1052, 477], [1078, 505], [1086, 513]], ticks: [[1079, 507, 1079, 513]] },
  {
    c: BLUE,
    pts: [[1109, 535], [1133, 553], [1163, 570.5], [1188, 581.5], [1216, 589.5], [1243, 593], [1257, 593.3], [1271, 592], [1298, 586.5], [1325, 578], [1350, 565.5], [1380, 545.5], [1392, 537]],
    ticks: [[1133, 535, 1133, 553], [1163, 535, 1163, 571], [1188, 535, 1188, 582], [1216, 535, 1216, 590], [1243, 536, 1243, 593], [1257, 536, 1257, 593], [1271, 536, 1271, 592], [1298, 536, 1298, 587], [1325, 536, 1325, 578], [1350, 536, 1350, 566], [1380, 537, 1380, 546]],
  },
  { c: RED, pts: [[1417, 515], [1435, 498], [1463, 466], [1463, 515]], ticks: [[1436, 498, 1436, 515]] },
]

const values: [string, number, number, string][] = [
  ["-15.6", 626, 204, RED],
  ["-19.0", 575, 233, RED],
  ["-3.0", 594, 307, RED],
  ["-30.8", 1037, 156, RED],
  ["11.9", 1082, 200, BLUE],
  ["-27.2", 1468, 198, RED],
  ["26.6", 816, 258, BLUE],
  ["26.3", 1257, 259, BLUE],
  ["31.0", 1524, 240, BLUE],
  ["17.2", 1511, 313, BLUE],
  ["-78.2", 1037, 444, RED],
  ["-51.0", 1052, 469, RED],
  ["-67.1", 1462, 457, RED],
  ["-25.8", 626, 488, RED],
  ["-3.3", 593, 528, RED],
  ["31.2", 670, 528, BLUE],
  ["-11.9", 1005, 531, RED],
  ["16.5", 1083, 531, BLUE],
  ["-33.7", 1412, 533, RED],
  ["43.3", 1532, 534, BLUE],
  ["83.6", 811, 620, BLUE],
  ["75.3", 1256, 615, BLUE],
  ["-31.3", 560, 894, RED],
  ["-51.8", 1393, 900, RED],
]

const nodes: Pt[] = [[620, 227], [620, 300], [618, 521], [616, 888], [1046, 193], [1044, 524], [1042, 890], [1472, 233], [1471, 306], [1470, 527], [1467, 894]]

function ModelView() {
  return (
    <section className="grid min-h-0 flex-1 overflow-hidden border-t-2 border-l-2 border-[#6c7078] bg-white font-['Liberation_Sans',sans-serif] text-[11px] text-black">
      <svg className="[grid-area:1/1] h-full w-full" role="img" aria-label="Internal forces M-y of the frame">
        <defs>
          <linearGradient id="col">
            <stop offset="0" stopColor="#7878ea" />
            <stop offset=".12" stopColor="#8c8cfa" />
            <stop offset=".6" stopColor="#9c9cff" />
            <stop offset=".9" stopColor="#9494ff" />
            <stop offset="1" stopColor="#7878ea" />
          </linearGradient>
          <linearGradient id="beam" x2="0" y2="1">
            <stop offset="0" stopColor="#8686f2" />
            <stop offset=".25" stopColor="#9a9aff" />
            <stop offset="1" stopColor="#8484f8" />
          </linearGradient>
        </defs>
        {/* frame geometry is kept in window coordinates */}
        <g transform="translate(-296 -91) rotate(-0.4)">
          <g fill="none" strokeWidth="1.500">
            {moments.map(({ c, pts, ticks }, i) => (
              <g key={i} stroke={c}>
                <polyline points={pts.map((p) => p.join(",")).join(" ")} />
                {ticks?.map(([x1, y1, x2, y2], k) => (
                  <line key={k} x1={x1} y1={y1} x2={x2} y2={y2} />
                ))}
              </g>
            ))}
          </g>
          <g fill="url(#beam)" stroke="#7c7cd8" strokeWidth=".5">
            <path d="M627 218.500 1038 185v16.500L628 235.500Z" />
            <path d="M1054 185.500 1465 225v16L1054 201.500Z" />
            <path d="M625 510.500 1464 516v21.500L625 531.500Z" />
          </g>
          <g stroke="#a8a8b8" strokeWidth="1" strokeDasharray="1 1">
            <path d="M612 230 608 888M628 235 623 888M1038 202 1034 890M1054 202 1049 890M1464 240 1460 894M1480 236 1475 894" />
          </g>
          <g fill="url(#col)">
            <path d="M612.500 226h14.500L622.500 888H609Z" />
            <path d="M1039 192h14.500L1048.500 890h-14Z" />
            <path d="M1464.500 232h14.500L1474.500 894h-14Z" />
          </g>
          <path d="M597 888h37v9H597ZM1449 894h37v9H1449Z" fill="#00ff00" />
          <circle cx="1041" cy="897" r="6" fill="#00ff00" />
          <path d="M1041 899l17 16H1024Z" fill="#00ff00" />
          {nodes.map(([x, y]) => (
            <g key={`${x}-${y}`}>
              <path d={`M${x - 6} ${y}h12`} stroke="#555" strokeDasharray="2 1" strokeWidth=".7" />
              <circle cx={x} cy={y} r="1.800" fill="#7c2020" />
            </g>
          ))}
          <g fontSize="19" fontWeight="bold" textAnchor="middle">
            {values.map(([label, x, y, c]) => (
              <text key={label + x} x={x} y={y} fill={c}>
                {label}
              </text>
            ))}
          </g>
        </g>
      </svg>
      <div className="[grid-area:1/1] flex flex-col justify-between px-[3px] pt-[4px] pb-[5px] leading-[14px]">
        <p>
          Internal Forces M-y [kNm]
          <br />
          LC1 : Design loads
        </p>
        <p>Max M-y: 83.6, Min M-y: -78.2 kNm</p>
      </div>
    </section>
  )
}

// ---------- results table ----------

const resultTabs = [
  "Results - Summary",
  "Nodes - Support Forces",
  "Nodes - Deformations",
  "Members - Local Deformations",
  "Members - Global Deformations",
  "Members - Internal Forces",
  "Members - Strains",
  "Members - Coefficients for Buckling",
  "Member Slendernesses",
  "Set of Members - Internal Forces",
]

const sums = [
  { name: "Sum of loads in X", value: "33.3", unit: "kN", comment: "" },
  { name: "Sum of support forces in X", value: "33.3", unit: "kN", comment: "Deviation:  0.00 %" },
]

const raised = "border-r-2 border-b-2 border-[#8c8c8c] bg-[#e0e0e0]"
const cell = "border-r border-b border-[#a4a4a8]"

function ResultsTable() {
  return (
    <table className="w-full table-fixed border-separate border-spacing-0 border-t border-l border-[#8c8c8c] text-[11px] leading-[14px] text-[#222]">
      <colgroup>
        <col className="w-[46px]" />
        <col className="w-[287px]" />
        <col className="w-[72px]" />
        <col className="w-[48px]" />
        <col className="w-[396px]" />
        <col />
      </colgroup>
      <thead>
        <tr className="h-[16px]">
          <th rowSpan={2} className={raised} />
          <th className="border-r-2 border-b-2 border-[#8c8c8c] bg-[#0078d7] font-normal text-white">A</th>
          {["B", "C", "D"].map((c) => (
            <th key={c} className={clsx("font-normal", raised)}>
              {c}
            </th>
          ))}
          <th className="border-b border-[#a4a4a8] bg-[#e0e0e0]" />
        </tr>
        <tr className="h-[16px] bg-[#f0f0f0]">
          {["Description", "Value", "Unit", "Comment"].map((c) => (
            <th key={c} className={clsx("font-normal", cell)}>
              {c}
            </th>
          ))}
          <th className="border-b border-[#a4a4a8]" />
        </tr>
      </thead>
      <tbody>
        <tr className="h-[16px]">
          <th className="border-r-2 border-b-2 border-[#8c8c8c] bg-[#0078d7]" />
          <th colSpan={4} className="border border-dotted border-[#333] bg-white pl-[2px] text-left text-black">
            <span className="flex items-center gap-[3px]">
              <svg viewBox="0 0 9 9" className="size-[9px]" aria-hidden="true">
                <path d="M.5.5h8v8h-8ZM2.500 4.500h4" fill="none" stroke="#333" />
              </svg>
              LC1 - Design loads
            </span>
          </th>
          <td className="border-b border-[#a4a4a8]" />
        </tr>
        {sums.map((row) => (
          <tr key={row.name} className="h-[16px] bg-[#fafbff]">
            <th className={raised} />
            <td className={clsx("pl-[6px]", cell)}>
              <span className="flex items-center gap-[7px] before:h-px before:w-3 before:bg-[#ccc]">{row.name}</span>
            </td>
            <td className={clsx("pr-[4px] text-right", cell)}>{row.value}</td>
            <td className={clsx("pl-[3px]", cell)}>{row.unit}</td>
            <td className={clsx("pl-[3px] whitespace-pre", cell)}>{row.comment}</td>
            <td className="border-b border-[#a4a4a8] bg-[#f0f0f0]" />
          </tr>
        ))}
      </tbody>
    </table>
  )
}

function ResultsPanel() {
  return (
    <section className="mt-[7px] flex shrink-0 flex-col">
      <h2 className="h-[20px] bg-[#b9c0cb] pl-[3px] text-[11px] leading-[20px] text-[#474d58]">4.0 Results - Summary</h2>
      <div
        role="toolbar"
        className="flex h-[25px] items-center border-b-2 border-[#7c8088] bg-linear-to-b from-[#e9edf8] to-[#d3d8e3] pl-[8px]"
      >
        <Tools items={resultsBar} id="table-load-case" selectClass="w-[197px]" />
      </div>
      <div className="flex h-[129px] flex-col bg-[#f0f0f0] font-['Liberation_Sans',sans-serif]">
        <div className="pl-[3px]">
          <ResultsTable />
        </div>
        <div role="tablist" className="mt-[9px] flex text-[11px] text-black">
          {resultTabs.map((tab, i) => (
            <button
              key={tab}
              type="button"
              role="tab"
              aria-selected={i === 0}
              className={clsx(
                "h-[17px] shrink-0 rounded-b-[4px] border-r border-b border-[#6c6c6c] leading-[15px] whitespace-nowrap",
                i === 0 ? "bg-[#f0f0f0] px-[3px]" : "border-t bg-[#e2e2e2] px-[1px]"
              )}
            >
              {tab}
            </button>
          ))}
        </div>
      </div>
    </section>
  )
}

// ---------- window ----------

const menus = ["File", "Edit", "View", "Insert", "Calculate", "Results", "Tools", "Table", "Options", "Add-on Modules", "Window", "Help"]
const accel: Record<string, number> = { Table: 2 }

function MenuBar() {
  return (
    <nav className="flex h-[25px] items-center pl-[8px] text-[11px] text-[#4f5663]">
      <span className="mr-[3px] h-[12px] border-l-2 border-dotted border-[#a4aab8]" />
      <svg viewBox="0 0 17 14" className="mr-[2px] h-[14px] w-[17px]" aria-hidden="true">
        <path d="M0 0h17v14H0Z" fill="#1d2866" />
        <path d="M0 9.500h17M6.500 1v12M10.500 4v9M1 9l5.500-7 4 7M6.500 3l9 6" stroke="#fff" fill="none" />
      </svg>
      {menus.map((menu) => {
        const k = accel[menu] ?? 0
        return (
          <button key={menu} type="button" className="px-2">
            {menu.slice(0, k)}
            <u className="underline-offset-2">{menu[k]}</u>
            {menu.slice(k + 1)}
          </button>
        )
      })}
    </nav>
  )
}

export default function App() {
  return (
    <div className="h-screen overflow-hidden bg-white font-['Open_Sans',sans-serif]">
      <div className="flex h-full w-[calc(100%+12px)] origin-top-left rotate-[0.4deg] flex-col bg-[#cfd3dd]">
        <div className="flex h-[12px] items-end gap-[5px] overflow-hidden bg-white pb-[2px] pl-[6px]">
          <svg viewBox="0 0 16 16" className="size-4 shrink-0" aria-hidden="true">
            <path d="M6 2h9l-5 13-4-4Z" fill="#6a88a8" stroke="#345" />
            <T x={0} y={15} s={11} c="#d8a010">5</T>
          </svg>
          <h1 className="text-[11px] leading-[14px] text-black">RFEM 5.22.01 x64 - [001626-model-file (3)*]</h1>
        </div>
        <MenuBar />
        <Bar groups={mainBar} id="load-case" />
        <Bar groups={modelBar} id="model-load-case" />
        <div className="flex min-h-0 flex-1">
          <Navigator />
          <main className="flex min-w-0 flex-1 flex-col pl-[5px]">
            <ModelView />
            <ResultsPanel />
          </main>
        </div>
      </div>
    </div>
  )
}
